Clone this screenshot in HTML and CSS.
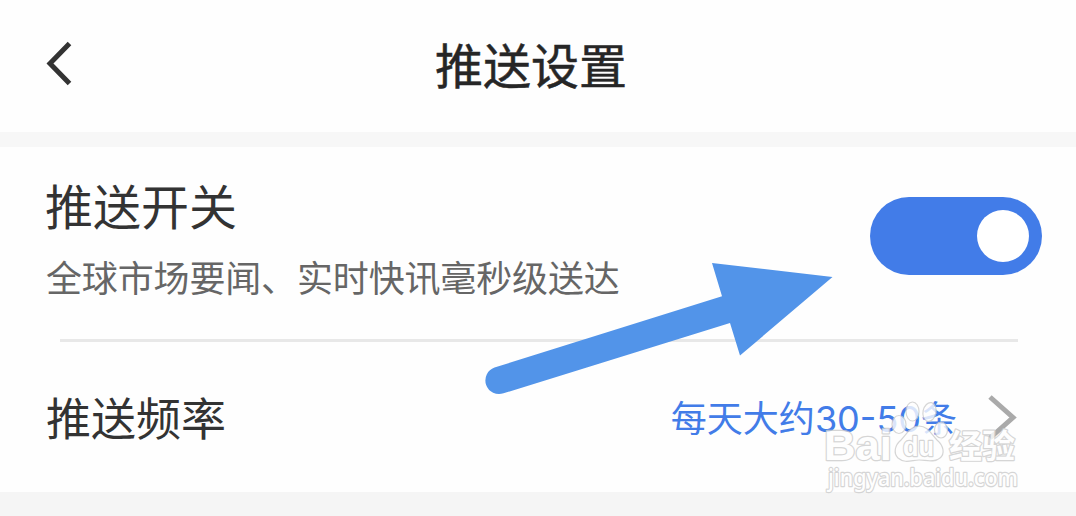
FILE: index.html
```html
<!DOCTYPE html>
<html lang="zh-CN">
<head>
    <meta charset="UTF-8">
    <meta name="viewport" content="width=device-width, initial-scale=1.0">
    <title>推送设置</title>
    <link rel="stylesheet" href="styles.css">
</head>
<body>
    <div class="page">
        <header class="header">
            <a class="back" href="#" aria-label="返回">
                <svg width="30" height="48" viewBox="0 0 30 48">
                    <path d="M24.5 3.5 L5 23.5 L24.5 43.5" />
                </svg>
            </a>
            <h1>推送设置</h1>
        </header>

        <main class="settings">
            <div class="row switch-row">
                <div class="row-text">
                    <h2>推送开关</h2>
                    <p>全球市场要闻、实时快讯毫秒级送达</p>
                </div>
                <div class="toggle" role="switch" aria-checked="true">
                    <span class="knob"></span>
                </div>
            </div>

            <div class="row frequency-row">
                <h3>推送频率</h3>
                <div class="value">
                    <span>每天大约<span class="number">30-50</span>条</span>
                    <svg class="chevron" width="32" height="48" viewBox="0 0 32 48">
                        <path d="M3 4 L26 24.5 L3 45" />
                    </svg>
                </div>
            </div>
        </main>

        <!-- Arrow pointing at the switch -->
        <svg class="arrow" width="350" height="136" viewBox="484 261 350 136">
            <path d="M494.5 367.6 L722 296.2 L712 263 L832.5 277 L740 355.5 L730 323 L503.5 393.3 A13.6 13.6 0 0 1 494.5 367.6 Z" />
        </svg>

        <!-- Watermark -->
        <svg class="watermark" width="208" height="100" viewBox="818 396 208 100">
            <g class="paw">
                <ellipse cx="899" cy="424.5" rx="7" ry="9" />
                <ellipse cx="912.5" cy="411.5" rx="6.5" ry="9.5" />
                <ellipse cx="929.5" cy="412" rx="6.5" ry="9.5" transform="rotate(12 929.5 412)" />
                <ellipse cx="941" cy="430" rx="6.5" ry="8" />
                <path d="M919 426 C928 426 931 434 937 440 C944 446 945 454 940 458 C934 463 926 460 919 460 C912 460 905 464 898 458 C893 453 895 445 901 440 C907 434 910 426 919 426 Z" />
            </g>
            <text class="logo" x="824" y="460" textLength="68" lengthAdjust="spacingAndGlyphs">Bai</text>
            <text class="logo logo-du" x="903" y="456" textLength="31" lengthAdjust="spacingAndGlyphs">du</text>
            <text class="logo-cn" x="949" y="458" textLength="66" lengthAdjust="spacingAndGlyphs">经验</text>
            <text class="site" x="828" y="486" textLength="190" lengthAdjust="spacingAndGlyphs">jingyan.baidu.com</text>
        </svg>
    </div>
</body>
</html>
```

FILE: styles.css
```css
/* Global Styles */
* {
    box-sizing: border-box;
}

body {
    margin: 0;
    background-color: #f5f5f5;
    font-family: "Noto Sans CJK SC", sans-serif;
    color: #333;
}

h1, h2, h3, p {
    margin: 0;
    font-weight: 400;
}

.page {
    position: relative;
    height: 516px;
    overflow: hidden;
}

/* Header Styles */
.header {
    display: grid;
    grid-template-columns: 76px 1fr 76px;
    align-items: center;
    height: 147px;
    padding: 0 0 4px;
    background-color: #fefefe;
    border-bottom: 15px solid #f7f7f7;
}

.back {
    display: flex;
    padding-left: 45px;
}

.back svg {
    flex: none;
    fill: none;
    stroke: #333;
    stroke-width: 5;
}

h1 {
    padding: 0 14px 2px 0;
    color: #262626;
    font-size: 48px;
    line-height: 70px;
    text-align: center;
    -webkit-text-stroke: 0.5px #262626;
}

/* Setting Rows */
.settings {
    height: 345px;
    background-color: #fefefe;
}

.row {
    display: flex;
    justify-content: space-between;
}

.switch-row {
    height: 195px;
    padding: 22px 34px 0 45px;
}

.switch-row::after {
    content: "";
    position: absolute;
    left: 60px;
    top: 339px;
    width: 958px;
    height: 3px;
    background-color: #e8e8e8;
}

h2 {
    font-size: 48px;
    line-height: 70px;
}

.row-text p {
    margin-top: 11px;
    padding-left: 1px;
    color: #666;
    font-size: 36px;
    line-height: 52px;
    letter-spacing: -0.15px;
}

.toggle {
    display: flex;
    justify-content: flex-end;
    width: 172px;
    height: 78px;
    margin-top: 28px;
    padding: 13px;
    border-radius: 39px;
    background-color: #427ce8;
}

.knob {
    width: 52px;
    height: 52px;
    border-radius: 50%;
    background-color: #fff;
}

.frequency-row {
    align-items: center;
    height: 150px;
    padding: 0 57px 0 46px;
}

h3 {
    padding-bottom: 2px;
    font-size: 45px;
}

.value {
    display: flex;
    align-items: center;
    gap: 30px;
    color: #427ce8;
    font-size: 36px;
}

.value > span {
    padding-bottom: 3px;
}

.number {
    font-family: Inter, sans-serif;
    font-size: 36px;
}

.chevron {
    fill: none;
    stroke: #aaa;
    stroke-width: 5;
}

/* Overlays */
.arrow {
    position: absolute;
    left: 484px;
    top: 261px;
    fill: #5294e9;
}

.watermark {
    position: absolute;
    left: 818px;
    top: 396px;
    fill: #fff;
    stroke: #ccc;
    opacity: 0.8;
}

.paw {
    stroke-width: 1.2;
}

.watermark text {
    paint-order: stroke;
    stroke-width: 2.4;
    stroke-linejoin: round;
}

.logo {
    font-family: "Liberation Sans", sans-serif;
    font-size: 42px;
    font-weight: 700;
}

.logo-du {
    font-size: 27px;
}

.logo-cn {
    font-size: 33px;
    font-weight: 700;
}

.site {
    font-family: "Noto Sans", sans-serif;
    font-size: 23px;
    font-weight: 500;
}
```
